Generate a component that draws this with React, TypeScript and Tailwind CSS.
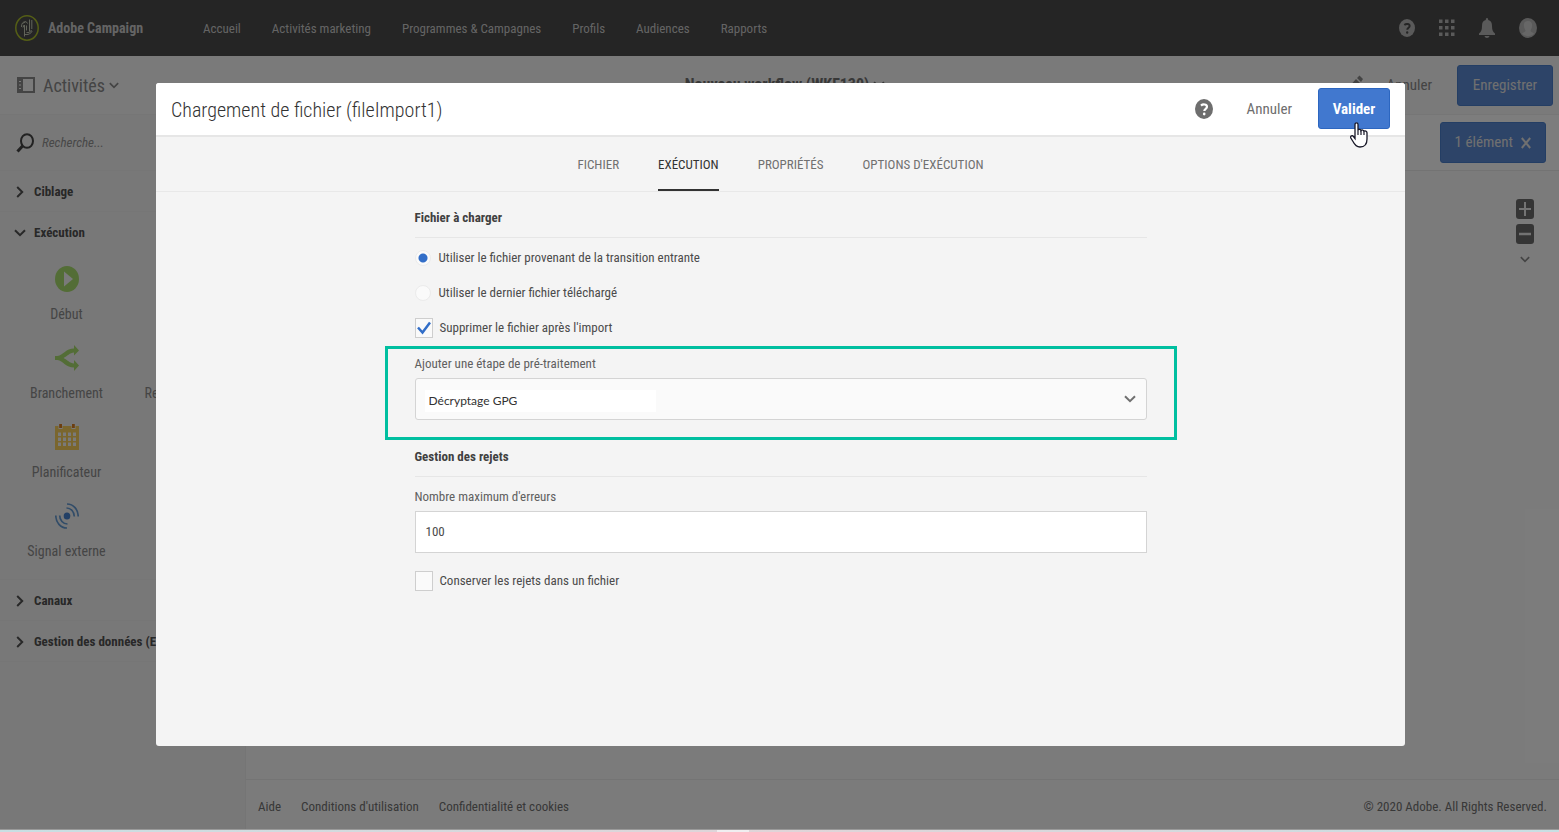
import { useState, type ReactNode } from "react";

const menu = ["Accueil", "Activités marketing", "Programmes & Campagnes", "Profils", "Audiences", "Rapports"];
const onglets = ["FICHIER", "EXÉCUTION", "PROPRIÉTÉS", "OPTIONS D'EXÉCUTION"];

function Chevron({ className }: { className: string }) {
    return (
        <svg viewBox="0 0 12 8" fill="none" stroke="currentColor" strokeWidth="2" className={className} aria-hidden="true">
            <path d="M1 1.2l5 5 5-5" />
        </svg>
    );
}

function IconeAide({ className }: { className: string }) {
    return (
        <svg viewBox="0 0 18 20" className={className} aria-hidden="true">
            <ellipse cx="9" cy="10" rx="9" ry="10" fill="currentColor" />
            <path d="M6 6.6c1.8-1.7 6-1.7 6 1.2 0 2-2.7 2-2.7 4.2" fill="none" stroke="var(--aide-fond)" strokeWidth="2.2" />
            <ellipse cx="9.2" cy="15" rx="1.3" ry="1.4" fill="var(--aide-fond)" />
        </svg>
    );
}

function Logo() {
    return (
        <svg viewBox="0 0 24 26" className="h-[26px] w-6" fill="none" aria-hidden="true">
            <ellipse cx="12" cy="13" rx="11.2" ry="12.2" stroke="#a9bc2c" strokeWidth="1.5" />
            <g stroke="#c4c8b4" strokeWidth="1">
                <path d="M6.500 12c0-3.500 1.200-5 3.500-5.200M7.500 8.500l3.500-2 1.500 2M9.500 10v11.500M11.500 10.500v5M8 12.500l1-2.500" />
                <path d="M14.500 4.500v12M16.800 5v9M10 19.500c2.500.5 6-.5 7.200-3.500M11.500 17.500c2 .5 4-.5 5-2.500" />
            </g>
        </svg>
    );
}

function IconeDebut() {
    return (
        <svg viewBox="0 0 24 26" className="h-[26px] w-6" aria-hidden="true">
            <ellipse cx="12" cy="13" rx="12" ry="13" fill="#a6da6c" />
            <path d="M9 5.500v15l9-7.500z" fill="#f4f4f4" />
        </svg>
    );
}

function IconeBranchement() {
    return (
        <svg viewBox="0 0 24 26" className="h-[26px] w-6" aria-hidden="true">
            <path d="M0 11h2.500C8 10 11 3.500 19 3.500V0l5 5.500-5 5V7.500c-4 0-7 4-10.500 5.500 3.500 1.500 6.500 5.500 10.500 5.500V15l5 5.500-5 5.500v-3.500C11 22.500 8 16 2.500 15H0z" fill="#a6da6c" />
        </svg>
    );
}

function IconePlanificateur() {
    return (
        <svg viewBox="0 0 24 26" className="h-[26px] w-6" aria-hidden="true">
            <path d="M0 2h24v24H0z" fill="#f4cd5c" />
            <path d="M3.500 0h4v5h-4zM16.500 0h4v5h-4z" fill="#f4f4f4" />
            <path d="M4.200 0H7v4H4.200zM17 0h2.800v4H17z" fill="#d87c20" />
            {[8.5, 13.5, 18.5].map((y) =>
                [3, 8, 13, 18].map((x) => <rect key={`${x}-${y}`} x={x} y={y} width="3" height="3.500" fill="#f4f4f4" />)
            )}
        </svg>
    );
}

function IconeSignal() {
    return (
        <svg viewBox="0 0 24 26" className="h-[26px] w-6" fill="none" stroke="#6398d0" strokeWidth="1.7" aria-hidden="true">
            <ellipse cx="12" cy="13" rx="3.300" ry="3.500" fill="#4780cc" stroke="none" />
            <path d="M12 1c6.500 0 11.200 5.500 11.200 12.500M11.500 5c4.500 0 7.800 3.800 7.800 8.500M12 25C5.500 25 .8 19.500.8 12.500M12.500 21c-4.500 0-7.800-3.800-7.800-8.500" />
        </svg>
    );
}

const activites = [
    { nom: "Début", icone: <IconeDebut /> },
    { nom: "", icone: null },
    { nom: "Branchement", icone: <IconeBranchement /> },
    { nom: "Rendez-vous", icone: null },
    { nom: "Planificateur", icone: <IconePlanificateur /> },
    { nom: "", icone: null },
    { nom: "Signal externe", icone: <IconeSignal /> },
];

function Groupe({ titre, ouvert, children }: { titre: string; ouvert?: boolean; children?: ReactNode }) {
    return (
        <section className="border-b border-[#ececec]">
            <button type="button" aria-expanded={!!ouvert} className="flex h-10 w-full items-center gap-2 pt-[2px] pl-[14px] text-left text-[13px] font-bold text-[#505050]">
                <Chevron className={ouvert ? "h-2 w-3" : "h-2 w-3 -rotate-90"} />
                <span className="whitespace-nowrap">{titre}</span>
            </button>
            {children}
        </section>
    );
}

function Entete() {
    return (
        <header className="flex h-14 shrink-0 items-center bg-[#4a4a4a] pr-[22px] pl-[15px] text-[#c8c8c8]">
            <Logo />
            <span className="ml-[9px] w-[155px] text-[14px] font-bold">Adobe Campaign</span>
            <nav className="flex gap-[31px] pt-[2px] text-[13px]">
                {menu.map((lien) => (
                    <a key={lien} href="#">{lien}</a>
                ))}
            </nav>
            <div className="ml-auto flex items-center gap-6 text-[#b4b4b4] [--aide-fond:#4a4a4a]">
                <button type="button" aria-label="Aide"><IconeAide className="h-[18px] w-4" /></button>
                <button type="button" aria-label="Solutions">
                    <svg viewBox="0 0 16 18" className="h-[18px] w-4" fill="currentColor" aria-hidden="true">
                        {[0.5, 7, 13.5].map((y) => [0, 6, 12].map((x) => <rect key={`${x}-${y}`} x={x} y={y} width="3.500" height="3.500" />))}
                    </svg>
                </button>
                <button type="button" aria-label="Notifications">
                    <svg viewBox="0 0 16 20" className="h-5 w-4" fill="currentColor" aria-hidden="true">
                        <path d="M8 0c1 0 1.200.8 1.200 2C12 2.500 13 5 13 8c0 4 1 6 3 7.500V17H0v-1.500C2 14 3 12 3 8c0-3 1-5.500 3.800-6C6.800.8 7 0 8 0zM5.500 18h5c-.5 2.500-4.500 2.500-5 0z" />
                    </svg>
                </button>
                <button type="button" aria-label="Profil">
                    <svg viewBox="0 0 18 20" className="h-5 w-[18px]" aria-hidden="true">
                        <ellipse cx="9" cy="10" rx="9" ry="10" fill="#b4b4b4" />
                        <path d="M9 3c3.500 0 4.500 2.500 4 5.500-.3 1.800-1 3-1.500 4 0 1.500 2.500 2 3.500 3-3 3.500-9 3.500-12 0 1-1 3.500-1.500 3.500-3-.5-1-1.200-2.200-1.500-4C4.500 5.500 5.500 3 9 3z" fill="#cecece" />
                    </svg>
                </button>
            </div>
        </header>
    );
}

function BarreLaterale() {
    return (
        <aside className="w-[246px] shrink-0 overflow-hidden border-r border-[#ebebeb] bg-[#f0f0f0]">
            <div className="flex h-14 items-center gap-2 border-b border-[#ececec] px-4 text-[#444]">
                <svg viewBox="0 0 18 20" className="h-5 w-[18px]" fill="none" stroke="currentColor" aria-hidden="true">
                    <ellipse cx="11" cy="8" rx="6" ry="6.800" strokeWidth="2" />
                    <path d="M7 12.500L1.500 18.500" strokeWidth="3" />
                </svg>
                <input type="text" aria-label="Recherche" placeholder="Recherche..." className="h-6 w-36 text-[13px] italic outline-none placeholder:text-[#909090]" />
            </div>
            <Groupe titre="Ciblage" />
            <Groupe titre="Exécution" ouvert>
                <ul className="grid grid-cols-[113px_113px] pb-[11px] pl-[10px] text-[14px] text-[#8a8a8a]">
                    {activites.map((activite, i) => (
                        <li key={i} className="flex h-[79px] flex-col items-center gap-3 pt-[14px]">
                            <span className="h-[26px] w-6">{activite.icone}</span>
                            <span className="leading-5">{activite.nom}</span>
                        </li>
                    ))}
                </ul>
            </Groupe>
            <Groupe titre="Canaux" />
            <Groupe titre="Gestion des données (ETL)" />
        </aside>
    );
}

function Espace() {
    return (
        <main className="flex min-w-0 flex-1 flex-col bg-[#f7f7f7]">
            <div className="flex h-14 items-center justify-end border-b border-[#e6e6e6] bg-[#fafafa] pr-[13px]">
                <button type="button" className="flex h-[41px] items-center gap-2 rounded-[3px] border border-[#487cc8] bg-[#5a88d0] px-[14px] text-[15px] text-[#e0e0e0]">
                    1 élément
                    <svg viewBox="0 0 10 12" className="h-3 w-[10px]" stroke="currentColor" strokeWidth="2" aria-hidden="true">
                        <path d="M.8 1l8.400 10M9.200 1L.8 11" />
                    </svg>
                </button>
            </div>
            <div className="flex flex-1 flex-col items-end gap-[5px] pt-7 pr-[25px] text-[#e6e6e6]">
                <button type="button" aria-label="Zoom avant" className="flex h-5 w-[18px] items-center justify-center rounded-[3px] bg-[#6a6a6a]">
                    <svg viewBox="0 0 12 14" className="h-[14px] w-3" stroke="currentColor" strokeWidth="2" aria-hidden="true"><path d="M0 7h12M6 0v14" /></svg>
                </button>
                <button type="button" aria-label="Zoom arrière" className="flex h-5 w-[18px] items-center justify-center rounded-[3px] bg-[#6a6a6a]">
                    <svg viewBox="0 0 12 14" className="h-[14px] w-3" stroke="currentColor" strokeWidth="2.500" aria-hidden="true"><path d="M0 7h12" /></svg>
                </button>
                <button type="button" aria-label="Plus d'options" className="flex h-5 w-[18px] items-center justify-center text-[#888]">
                    <Chevron className="h-[7px] w-[10px]" />
                </button>
            </div>
            <footer className="flex h-[50px] items-center gap-5 border-t border-[#e8e8e8] pt-1 pr-3 pl-3 text-[13px] text-[#707070]">
                <a href="#">Aide</a>
                <a href="#">Conditions d'utilisation</a>
                <a href="#">Confidentialité et cookies</a>
                <span className="ml-auto">© 2020 Adobe. All Rights Reserved.</span>
            </footer>
        </main>
    );
}

function Curseur() {
    return (
        <svg viewBox="0 0 18 26" className="pointer-events-none absolute top-[34px] left-[32px] h-[26px] w-[18px]" aria-hidden="true">
            <path d="M5 2.500C5 .3 8 .3 8 2.500V8c.5-1 2.800-.8 3 .5.800-1 2.800-.5 3 .8 1-.8 3 0 3 1.500V17c0 5-2 8-7 8-4 0-5.500-2.500-7-5.500L.8 16C0 14 2.500 13 3.500 14.500L5 16.500z" fill="#fff" stroke="#181828" strokeWidth="1.300" />
            <path d="M8 8v5M11 8.500V13M14 9.500V13" stroke="#181828" strokeWidth="1.200" />
        </svg>
    );
}

function Titre({ children }: { children: ReactNode }) {
    return <h2 className="border-b border-[#e6e6e6] pb-[9px] text-[13px] leading-5 font-bold text-[#404040]">{children}</h2>;
}

function Case({ label, checked, onChange }: { label: string; checked: boolean; onChange: (v: boolean) => void }) {
    return (
        <label className="flex h-5 items-center gap-[7px] text-[13px] text-[#4b4b4b]">
            <span className="grid">
                <input
                    type="checkbox"
                    checked={checked}
                    onChange={(e) => onChange(e.target.checked)}
                    className="col-start-1 row-start-1 h-5 w-[18px] appearance-none border border-[#cecece] bg-[#fafafa]"
                />
                {checked && (
                    <svg viewBox="0 0 18 20" className="pointer-events-none col-start-1 row-start-1 h-5 w-[18px]" fill="none" stroke="#326ec8" strokeWidth="2.500" aria-hidden="true">
                        <path d="M3 9.500l4.500 5L15 4.500" />
                    </svg>
                )}
            </span>
            {label}
        </label>
    );
}

function ChargementFichier() {
    const [source, setSource] = useState("transition");
    const [supprimer, setSupprimer] = useState(true);
    const [conserver, setConserver] = useState(false);

    const sources = [
        { id: "transition", label: "Utiliser le fichier provenant de la transition entrante" },
        { id: "dernier", label: "Utiliser le dernier fichier téléchargé" },
    ];

    return (
        <div role="dialog" aria-label="Chargement de fichier" className="flex h-4/5 w-full flex-col overflow-hidden rounded-[3px] bg-[#f4f4f4]">
            <div className="relative flex h-[54px] shrink-0 items-center border-b-2 border-[#e6e6e6] bg-white pr-[15px] pl-[15px] text-[#6e6e6e] [--aide-fond:#fff]">
                <h1 className="pt-[2px] text-[20px] font-light text-[#323232]">Chargement de fichier (fileImport1)</h1>
                <button type="button" aria-label="Aide" className="ml-auto"><IconeAide className="h-5 w-[18px]" /></button>
                <button type="button" className="ml-[34px] text-[15px]">Annuler</button>
                <div className="relative ml-[26px]">
                    <button type="button" className="h-[41px] w-[72px] rounded-[3px] border border-[#2c66c0] bg-[#4178cf] text-[15px] font-bold text-white">
                        Valider
                    </button>
                    <Curseur />
                </div>
            </div>

            {/* Onglets */}
            <div className="flex h-[55px] shrink-0 justify-center gap-[39px] border-b border-[#e8e8e8] text-[13px] text-[#707070]">
                {onglets.map((onglet) => (
                    <button
                        key={onglet}
                        type="button"
                        className={onglet === "EXÉCUTION" ? "border-b-2 border-[#323232] pt-1 text-[#323232]" : "border-b-2 border-transparent pt-1"}
                    >
                        {onglet}
                    </button>
                ))}
            </div>

            <form className="mx-auto w-full max-w-[732px] pt-4">
                <Titre>Fichier à charger</Titre>
                <div className="flex flex-col gap-[15px] pt-[10px] pb-2">
                    {sources.map((s) => (
                        <label key={s.id} className="flex h-5 items-center gap-2 text-[13px] text-[#4b4b4b]">
                            <input
                                type="radio"
                                name="source"
                                checked={source === s.id}
                                onChange={() => setSource(s.id)}
                                className="size-4 appearance-none rounded-full border border-[#ebebeb] bg-[#fafafa] checked:bg-[radial-gradient(circle,#326ec8_4px,#fafafa_5px)]"
                            />
                            {s.label}
                        </label>
                    ))}
                    <Case label="Supprimer le fichier après l'import" checked={supprimer} onChange={setSupprimer} />
                </div>

                <div className="-mx-[30px] h-[94px] border-[3px] border-[#00bfa0] px-[27px] pt-[5px]">
                    <label htmlFor="traitement" className="block text-[13px] leading-5 text-[#606060]">Ajouter une étape de pré-traitement</label>
                    <div className="mt-1 flex h-[42px] items-center justify-between rounded-[3px] border border-[#d4d4d4] bg-[#fafafa] pr-[10px] pl-[9px]">
                        <select id="traitement" className="mt-1 h-[22px] w-[231px] appearance-none bg-white px-1 font-['Lato',sans-serif] text-[12px] text-[#323232]">
                            <option>Décryptage GPG</option>
                        </select>
                        <Chevron className="h-2 w-3 text-[#707070]" />
                    </div>
                </div>

                <div className="pt-[7px]">
                    <Titre>Gestion des rejets</Titre>
                </div>
                <label htmlFor="erreurs" className="block pt-[10px] text-[13px] leading-5 text-[#606060]">Nombre maximum d'erreurs</label>
                <input
                    id="erreurs"
                    type="text"
                    defaultValue="100"
                    className="mt-1 mb-[18px] h-[42px] w-full border border-[#d4d4d4] bg-white px-[10px] text-[13px] text-[#4b4b4b]"
                />
                <Case label="Conserver les rejets dans un fichier" checked={conserver} onChange={setConserver} />
            </form>
        </div>
    );
}

function App() {
    return (
        <div className="flex min-h-screen flex-col font-['Roboto_Condensed','Roboto',sans-serif]">
            <div className="relative flex flex-1 flex-col bg-[#f4f4f4]">
                <Entete />
                <div className="grid h-[59px] shrink-0 grid-cols-[1fr_auto_1fr] items-center border-b border-[#ececec] bg-[#f4f4f4] pr-[6px] pl-[17px] text-[#888]">
                    <button type="button" className="flex items-center justify-self-start text-[18px]">
                        <svg viewBox="0 0 18 16" className="mr-2 h-4 w-[18px]" fill="none" stroke="currentColor" strokeWidth="2" aria-hidden="true">
                            <path d="M1 1h16v14H1z" />
                            <path d="M0 0h6v16H0z" fill="currentColor" stroke="none" />
                            <path d="M2 4.500h2M2 8h2M2 11.500h2" stroke="#f4f4f4" strokeWidth="1" />
                        </svg>
                        Activités
                        <Chevron className="ml-1 h-[7px] w-[10px]" />
                    </button>
                    <div className="flex items-center gap-1 text-[16px] font-bold text-[#707070]">
                        Nouveau workflow (WKF130)
                        <Chevron className="h-2 w-3" />
                    </div>
                    <div className="flex items-center justify-self-end text-[15px]">
                        <svg viewBox="0 0 18 20" className="mr-6 h-5 w-[18px]" fill="currentColor" aria-hidden="true">
                            <path d="M2 14L11 4l4 4-9.500 10L1 19zM12 3l2.500-2.500L18 4l-2 3z" />
                        </svg>
                        <button type="button">Annuler</button>
                        <button type="button" className="ml-[25px] h-[41px] w-24 rounded-[3px] border border-[#487cc8] bg-[#5a88d0] text-[#e0e0e0]">
                            Enregistrer
                        </button>
                    </div>
                </div>
                <div className="flex flex-1">
                    <BarreLaterale />
                    <Espace />
                </div>

                {/* Fenêtre modale */}
                <div className="absolute inset-0 flex items-center bg-black/50 pr-[154px] pl-[156px]">
                    <ChargementFichier />
                </div>
            </div>
            <div className="flex h-[3px] shrink-0 border-t border-[#999] bg-linear-to-r from-[#c8dfe3] via-[#e0d4d8] to-[#c8dfe3] pl-[46%]">
                <div className="w-8 bg-[#f0eef0]" />
            </div>
        </div>
    );
}

export default App;
